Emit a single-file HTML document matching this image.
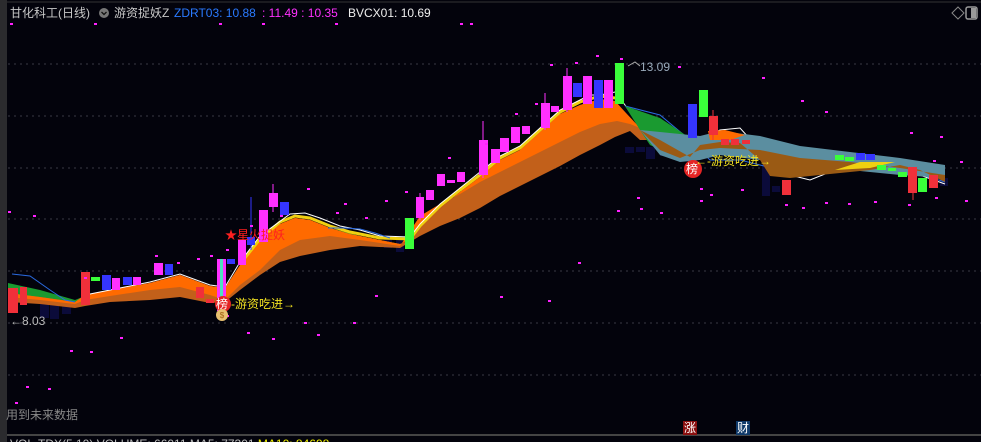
<!DOCTYPE html>
<html><head><meta charset="utf-8"><style>
html,body{margin:0;padding:0;background:#03030c;width:981px;height:442px;overflow:hidden;}
body{position:relative;font-family:"Liberation Sans","Noto Sans CJK SC",sans-serif;}
.t{position:absolute;white-space:nowrap;font-size:12px;line-height:14px;}
</style></head><body>
<svg width="981" height="442" style="position:absolute;left:0;top:0" xmlns="http://www.w3.org/2000/svg">
<rect x="0" y="0" width="981" height="442" fill="#03030c"/>
<rect x="0" y="0" width="7" height="442" fill="#2b2b2e"/>
<line x1="7" y1="2" x2="981" y2="2" stroke="#333" stroke-width="1"/>
<g stroke="#3a3a44" stroke-dasharray="2,4" stroke-width="1">
<line x1="8" y1="64" x2="981" y2="64"/><line x1="8" y1="116" x2="981" y2="116"/>
<line x1="8" y1="168" x2="981" y2="168"/><line x1="8" y1="219" x2="981" y2="219"/>
<line x1="8" y1="271" x2="981" y2="271"/><line x1="8" y1="323" x2="981" y2="323"/>
<line x1="8" y1="375" x2="981" y2="375"/>
</g>
<line x1="7" y1="435" x2="981" y2="435" stroke="#444" stroke-width="2"/>
<g fill="#0b0b3a">
<rect x="40" y="300" width="9" height="18"/><rect x="50" y="305" width="9" height="14"/><rect x="62" y="306" width="9" height="8"/>
<rect x="384" y="238" width="8" height="10"/><rect x="396" y="240" width="8" height="12"/>
<rect x="625" y="147" width="9" height="6"/><rect x="636" y="147" width="9" height="5"/><rect x="646" y="147" width="9" height="12"/>
<rect x="660" y="152" width="9" height="4"/><rect x="671" y="152" width="9" height="6"/>
<rect x="762" y="152" width="8" height="44"/><rect x="772" y="186" width="8" height="6"/>
<rect x="940" y="178" width="8" height="8"/>
</g>
<polygon fill="#1a9a30" points="8,283 40,290 75,300 85,296 110,292 150,284 180,276 210,290 225,292 225,300 210,300 180,296 150,294 110,298 85,302 75,305 40,300 8,298"/>
<polygon fill="#1a9a30" points="330,228 360,236 380,240 400,244 400,246 360,242 330,236"/>
<polygon fill="#c2601a" points="8,293 40,297 75,302 85,295 110,290 150,283 180,275 210,286 225,288 240,265 260,240 280,224 295,218 310,220 330,228 350,234 380,240 400,244 410,240 420,228 440,208 460,192 480,177 500,160 520,150 540,132 560,114 580,105 600,99 615,101 625,112 640,128 660,132 700,140 640,140 630,131 615,137 600,145 580,155 560,166 540,176 520,186 500,196 480,208 460,218 440,226 420,236 400,248 360,246 330,250 300,256 280,262 260,275 240,290 225,302 210,303 180,297 150,300 110,302 85,306 75,308 40,304 8,302"/>
<polygon fill="#ff6a00" points="8,293 40,297 75,302 85,295 110,290 150,283 180,275 210,286 225,288 240,265 260,240 280,224 295,218 310,220 330,228 350,234 380,240 400,244 410,240 420,228 440,208 460,192 480,177 500,160 520,150 540,132 560,114 580,105 600,99 615,101 625,112 640,128 630,124 617,121 600,124 580,132 560,142 540,152 520,162 500,172 480,182 460,194 440,204 420,216 400,246 360,240 330,236 300,240 280,250 260,270 240,285 225,300 210,295 180,287 150,290 110,296 85,300 75,304 40,300 8,297"/>
<polyline fill="none" stroke="#f0d010" stroke-width="3" points="240,264 260,239 280,222 295,216 310,218 330,226 350,232 380,238 410,239 420,226 440,206 460,190 480,175 500,158 520,148 540,130 560,112 580,102 600,96 615,98"/>
<polyline fill="none" stroke="#fff" stroke-width="1" points="85,295 110,290 150,282 180,274 210,285 225,287 240,262 260,236 290,214 305,213 320,218 340,226 360,230 380,236 410,237 420,224 440,204 460,188 480,172 500,156 520,146 540,128 560,110 580,100 590,95 600,95 615,92 625,105 640,128 660,150 690,158 700,140 720,130 740,128 760,150 790,175 810,180 830,172 860,165 900,168 945,184"/>
<polyline fill="none" stroke="#2a6ae0" stroke-width="1" points="12,274 30,276 50,290 65,300 75,302"/>
<polyline fill="none" stroke="#2a6ae0" stroke-width="1" points="328,228 345,228 360,229 375,233 390,238"/>
<polyline fill="none" stroke="#2a6ae0" stroke-width="1" points="625,106 660,115 690,140 710,160 740,160 760,165 780,170 810,170 840,165 880,162 945,182"/>
<polygon fill="#1a9a30" points="625,106 660,118 690,138 700,140 690,157 670,155 650,145 640,130"/>
<polygon fill="#5b8ea0" points="640,130 660,132 700,136 720,131 760,136 800,146 850,152 900,158 945,165 945,178 900,175 850,170 800,165 760,160 720,155 700,160 680,162 660,155"/>
<polygon fill="#9a5a14" points="640,130 660,140 690,157 700,145 720,142 740,143 760,160 770,176 790,178 830,174 870,170 900,165 920,170 945,182 945,175 900,168 850,162 800,158 760,150 720,148 700,150 680,158 660,150"/>
<polygon fill="#ff6a00" points="708,131 725,130 745,135 730,140 710,140"/>
<polygon fill="#f0d010" points="835,170 860,162 895,162 870,168"/>
<g>
<rect x="8" y="288" width="10" height="25" fill="#f0303a"/><rect x="20" y="287" width="7" height="18" fill="#f0303a"/>
<rect x="81" y="272" width="9" height="33" fill="#f0303a"/>
<rect x="91" y="277" width="9" height="4" fill="#3aff3a"/>
<rect x="102" y="275" width="9" height="15" fill="#3535ff"/><rect x="112" y="278" width="8" height="12" fill="#ff30ff"/>
<rect x="123" y="277" width="9" height="8" fill="#3535ff"/><rect x="133" y="277" width="8" height="8" fill="#ff30ff"/>
<rect x="154" y="263" width="9" height="12" fill="#ff30ff"/><rect x="165" y="264" width="8" height="11" fill="#3535ff"/>
<rect x="196" y="287" width="8" height="11" fill="#f0303a"/><rect x="206" y="299" width="8" height="4" fill="#f0303a"/>
<rect x="217" y="259" width="9" height="52" fill="#ff30ff"/><rect x="220" y="259" width="3" height="52" fill="#50e0c0"/>
<rect x="227" y="259" width="8" height="5" fill="#3535ff"/><rect x="238" y="240" width="8" height="25" fill="#ff30ff"/>
<line x1="251" y1="197" x2="251" y2="250" stroke="#3535ff"/><rect x="247" y="237" width="8" height="8" fill="#3535ff"/>
<rect x="259" y="210" width="9" height="32" fill="#ff30ff"/><line x1="273" y1="184" x2="273" y2="212" stroke="#ff30ff"/><rect x="269" y="193" width="9" height="14" fill="#ff30ff"/>
<rect x="280" y="202" width="9" height="13" fill="#3535ff"/>
<rect x="405" y="218" width="9" height="31" fill="#3aff3a"/>
<line x1="420" y1="193" x2="420" y2="220" stroke="#ff30ff"/><rect x="416" y="197" width="8" height="21" fill="#ff30ff"/>
<rect x="426" y="190" width="8" height="10" fill="#ff30ff"/><rect x="437" y="174" width="8" height="12" fill="#ff30ff"/>
<rect x="447" y="180" width="8" height="3" fill="#ff30ff"/><rect x="457" y="172" width="8" height="10" fill="#ff30ff"/>
<line x1="483" y1="121" x2="483" y2="178" stroke="#ff30ff"/><rect x="479" y="140" width="9" height="35" fill="#ff30ff"/>
<rect x="491" y="149" width="9" height="14" fill="#ff30ff"/><rect x="500" y="138" width="9" height="14" fill="#ff30ff"/>
<rect x="511" y="127" width="9" height="16" fill="#ff30ff"/><rect x="522" y="126" width="8" height="8" fill="#ff30ff"/>
<line x1="545" y1="93" x2="545" y2="130" stroke="#ff30ff"/><rect x="541" y="103" width="9" height="25" fill="#ff30ff"/>
<rect x="551" y="106" width="8" height="6" fill="#ff30ff"/>
<line x1="567" y1="68" x2="567" y2="112" stroke="#ff30ff"/><rect x="563" y="76" width="9" height="34" fill="#ff30ff"/>
<rect x="573" y="83" width="9" height="14" fill="#3535ff"/><rect x="583" y="76" width="9" height="28" fill="#ff30ff"/>
<rect x="594" y="80" width="9" height="28" fill="#3535ff"/><rect x="604" y="80" width="9" height="28" fill="#ff30ff"/>
<rect x="615" y="63" width="9" height="41" fill="#3aff3a"/>
<rect x="688" y="104" width="9" height="34" fill="#3535ff"/><rect x="699" y="90" width="9" height="27" fill="#3aff3a"/>
<line x1="713" y1="110" x2="713" y2="140" stroke="#f0303a"/><rect x="709" y="116" width="9" height="19" fill="#f0303a"/>
<rect x="721" y="139" width="8" height="6" fill="#f0303a"/><rect x="731" y="139" width="8" height="6" fill="#f0303a"/><rect x="742" y="140" width="8" height="4" fill="#f0303a"/>
<rect x="782" y="180" width="9" height="15" fill="#f0303a"/>
<rect x="835" y="155" width="9" height="5" fill="#3aff3a"/><rect x="845" y="157" width="9" height="4" fill="#3aff3a"/>
<rect x="856" y="153" width="9" height="7" fill="#3535ff"/><rect x="866" y="154" width="9" height="6" fill="#3535ff"/>
<rect x="877" y="165" width="9" height="5" fill="#3aff3a"/><rect x="888" y="168" width="8" height="3" fill="#3aff3a"/>
<rect x="898" y="172" width="9" height="5" fill="#3aff3a"/>
<line x1="913" y1="167" x2="913" y2="200" stroke="#f0303a"/><rect x="908" y="167" width="9" height="26" fill="#f0303a"/>
<rect x="918" y="178" width="9" height="14" fill="#3aff3a"/><rect x="929" y="175" width="9" height="13" fill="#f0303a"/>
</g>
<g fill="#ff20ff">
<rect x="10" y="23" width="3" height="2"/><rect x="94" y="23" width="3" height="2"/><rect x="219" y="23" width="3" height="2"/><rect x="262" y="23" width="3" height="2"/><rect x="335" y="23" width="3" height="2"/><rect x="460" y="23" width="3" height="2"/><rect x="470" y="23" width="3" height="2"/>
<rect x="596" y="55" width="3" height="2"/><rect x="575" y="62" width="3" height="2"/><rect x="550" y="64" width="3" height="2"/><rect x="620" y="58" width="3" height="2"/>
<rect x="678" y="66" width="3" height="2"/><rect x="762" y="77" width="3" height="2"/><rect x="801" y="100" width="3" height="2"/><rect x="825" y="111" width="3" height="2"/>
<rect x="910" y="132" width="3" height="2"/><rect x="940" y="136" width="3" height="2"/><rect x="960" y="161" width="3" height="2"/><rect x="933" y="160" width="3" height="2"/>
<rect x="535" y="103" width="3" height="2"/><rect x="515" y="113" width="3" height="2"/><rect x="485" y="143" width="3" height="2"/><rect x="448" y="157" width="3" height="2"/>
<rect x="405" y="191" width="3" height="2"/><rect x="385" y="200" width="3" height="2"/><rect x="307" y="188" width="3" height="2"/><rect x="336" y="212" width="3" height="2"/>
<rect x="344" y="203" width="3" height="2"/><rect x="365" y="217" width="3" height="2"/><rect x="8" y="211" width="3" height="2"/><rect x="33" y="215" width="3" height="2"/>
<rect x="250" y="225" width="3" height="2"/><rect x="280" y="215" width="3" height="2"/><rect x="210" y="255" width="3" height="2"/><rect x="226" y="249" width="3" height="2"/>
<rect x="84" y="277" width="3" height="2"/><rect x="155" y="255" width="3" height="2"/><rect x="177" y="262" width="3" height="2"/><rect x="197" y="258" width="3" height="2"/>
<rect x="226" y="315" width="3" height="2"/><rect x="247" y="332" width="3" height="2"/><rect x="272" y="338" width="3" height="2"/><rect x="304" y="322" width="3" height="2"/>
<rect x="317" y="334" width="3" height="2"/><rect x="353" y="322" width="3" height="2"/><rect x="375" y="295" width="3" height="2"/><rect x="500" y="296" width="3" height="2"/>
<rect x="548" y="300" width="3" height="2"/><rect x="578" y="262" width="3" height="2"/><rect x="617" y="210" width="3" height="2"/><rect x="640" y="208" width="3" height="2"/>
<rect x="660" y="212" width="3" height="2"/><rect x="700" y="200" width="3" height="2"/><rect x="710" y="194" width="3" height="2"/><rect x="741" y="189" width="3" height="2"/>
<rect x="785" y="204" width="3" height="2"/><rect x="802" y="207" width="3" height="2"/><rect x="825" y="202" width="3" height="2"/><rect x="848" y="203" width="3" height="2"/>
<rect x="874" y="201" width="3" height="2"/><rect x="908" y="204" width="3" height="2"/><rect x="935" y="197" width="3" height="2"/><rect x="965" y="200" width="3" height="2"/>
<rect x="637" y="197" width="3" height="2"/><rect x="700" y="188" width="3" height="2"/>
<rect x="26" y="386" width="3" height="2"/><rect x="15" y="402" width="3" height="2"/><rect x="48" y="388" width="3" height="2"/>
<rect x="90" y="351" width="3" height="2"/><rect x="70" y="350" width="3" height="2"/><rect x="120" y="337" width="3" height="2"/>
</g>
<circle cx="223" cy="304" r="8" fill="#e52424"/>
<circle cx="222" cy="315" r="6" fill="#e8c070"/><text x="222" y="318" font-size="8" text-anchor="middle" fill="#a06010" font-family="Liberation Sans">$</text>
<circle cx="693" cy="169" r="9" fill="#e52424"/>
<polyline points="628,66 635,62 640,66" fill="none" stroke="#aaa" stroke-width="1"/>
<path d="M952 13 L958 7 L964 13 L958 19 Z" fill="none" stroke="#888"/>
<rect x="966" y="7" width="11" height="12" rx="2" fill="none" stroke="#999" stroke-width="1.5"/><rect x="971" y="8" width="5" height="10" fill="#999"/>
<circle cx="104" cy="13" r="5" fill="#777"/><path d="M101.5 12 L104 14.5 L106.5 12" stroke="#111" fill="none" stroke-width="1.3"/>
<rect x="683" y="421" width="14" height="14" fill="#8a1010"/><rect x="736" y="421" width="14" height="14" fill="#103a6a"/>
</svg>
<div class="t" style="left:10px;top:6px;color:#c8c8c8">甘化科工(日线)</div>
<div class="t" style="left:114px;top:6px;color:#c8c8c8">游资捉妖Z</div>
<div class="t" style="left:174px;top:6px;color:#2a7aff">ZDRT03: 10.88</div>
<div class="t" style="left:262px;top:6px;color:#ff30ff">: 11.49 : 10.35</div>
<div class="t" style="left:348px;top:6px;color:#eee">BVCX01: 10.69</div>
<div class="t" style="left:640px;top:60px;color:#9ab">13.09</div>
<div class="t" style="left:10px;top:314px;color:#bbb">←8.03</div>
<div class="t" style="left:225px;top:228px;color:#ff2020">★星火捉妖</div>
<div class="t" style="left:216px;top:297px;color:#fff">榜</div>
<div class="t" style="left:231px;top:297px;color:#f0e020">-游资吃进→</div>
<div class="t" style="left:686px;top:162px;color:#fff">榜</div>
<div class="t" style="left:695px;top:154px;color:#f0e020">←-游资吃进→</div>
<div class="t" style="left:6px;top:408px;color:#888">用到未来数据</div>
<div class="t" style="left:684px;top:421px;color:#fff">涨</div>
<div class="t" style="left:737px;top:421px;color:#fff">财</div>
<div class="t" style="left:10px;top:437px;color:#bbb">VOL-TDX(5,10) VOLUME: 66011 MA5: 77301 <span style="color:#ee0">MA10: 84698</span></div>
</body></html>
